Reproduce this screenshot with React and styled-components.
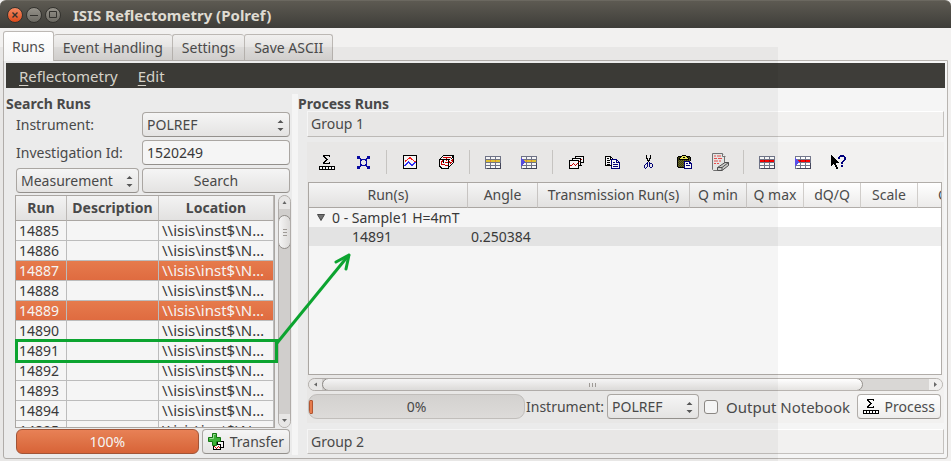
import React from "react";
import styled, { createGlobalStyle, css } from "styled-components";

const GlobalStyle = createGlobalStyle`
  *, *::before, *::after { box-sizing: border-box; }
  body { margin: 0; background: #f2f1f0; }
  body, button, input, select, table {
    font-family: "Noto Sans", "Open Sans", sans-serif;
    font-size: 14px;
    line-height: 20px;
    color: #4c4c4c;
  }
  button, input, select { margin: 0; padding: 0; }
`;

/* ---------- window frame ---------- */

const Window = styled.div`
  position: relative;
  display: flex;
  flex-direction: column;
  height: 100vh;
  min-height: 440px;
  overflow: hidden;
  background: #f2f1f0;
`;

const TitleBar = styled.header`
  display: flex;
  align-items: center;
  flex: none;
  gap: 3px;
  height: 28px;
  padding: 0 7px;
  border-radius: 6px 6px 0 0;
  background: linear-gradient(#5d5a52, #3e3d39);
  border-top: 1px solid #6b6860;
`;

const WindowButton = styled.button`
  display: grid;
  place-items: center;
  width: 16px;
  height: 16px;
  border: 1px solid #33322e;
  border-radius: 50%;
  color: #33322e;
  background: ${(p) =>
    p.$close ? "linear-gradient(#f58a62, #dd4a1a)" : "linear-gradient(#95928a, #6c6a63)"};
`;

const Title = styled.h1`
  margin: 0 0 0 9px;
  font-size: 15px;
  line-height: 20px;
  font-weight: 700;
  color: #dfdbd2;
`;

const TabList = styled.div`
  display: flex;
  align-items: flex-end;
  flex: none;
  height: 32px;
  padding: 0 3px;
`;

const Tab = styled.button`
  height: 26px;
  padding: 0 9px;
  white-space: nowrap;
  border: 1px solid #bcb8b4;
  border-left-width: ${(p) => (p.$first ? "0" : "1px")};
  border-right-width: 0;
  border-bottom: 0;
  border-radius: 3px 3px 0 0;
  background: linear-gradient(#f1f0ef, #d9d7d5);
  &:last-child { border-right-width: 1px; }
  ${(p) =>
    p.$active &&
    css`
      position: relative;
      z-index: 1;
      height: 30px;
      margin-bottom: -1px;
      padding: 0 8px;
      border-width: 1px 1px 0 1px;
      background: linear-gradient(#ffffff, #f5f5f5);
    `}
`;

const Panel = styled.main`
  display: flex;
  flex-direction: column;
  flex: 1;
  min-height: 0;
  margin: 0 3px 2px;
  padding: 2px 2px 0;
  border: 1px solid #b8b4b0;
  border-radius: 0 0 3px 3px;
  background: #f5f5f5;
`;

const MenuBar = styled.nav`
  display: flex;
  align-items: center;
  flex: none;
  gap: 20px;
  height: 25px;
  padding: 0 13px;
  background: #3e3d39;
`;

const MenuItem = styled.button`
  border: 0;
  background: none;
  font-size: 15px;
  color: #dfdbd2;
  u { text-underline-offset: 3px; }
`;

const Columns = styled.div`
  display: flex;
  flex: 1;
  min-height: 0;
`;

const SectionTitle = styled.h2`
  flex: none;
  margin: 8px 0 0;
  font-size: 14px;
  line-height: 15px;
  font-weight: 700;
`;

/* ---------- shared controls ---------- */

const controlBox = css`
  height: 25px;
  border: 1px solid #b1ada9;
  border-bottom-color: #9a9692;
  border-radius: 4px;
`;

const Button = styled.button`
  ${controlBox}
  display: flex;
  align-items: center;
  justify-content: center;
  gap: ${(p) => (p.$tight ? "6px" : "4px")};
  padding: 0 ${(p) => (p.$tight ? "5px" : "8px")};
  white-space: nowrap;
  background: linear-gradient(#ffffff, #eeedec);
`;

const SelectWrap = styled.div`
  display: grid;
  align-items: center;
  > * { grid-area: 1 / 1; }
  > svg { justify-self: end; margin-right: 6px; pointer-events: none; }
`;

const SelectField = styled.select`
  ${controlBox}
  appearance: none;
  width: 100%;
  padding: 0 18px 0 4px;
  background: linear-gradient(#ffffff, #eeedec);
`;

const TextField = styled.input`
  ${controlBox}
  width: 100%;
  padding: 0 4px;
  background: #ffffff;
  color: #3c3c3c;
`;

function Select({ id, label, options }) {
  return (
    <SelectWrap>
      <SelectField id={id} aria-label={label}>
        {options.map((o) => (
          <option key={o}>{o}</option>
        ))}
      </SelectField>
      <svg width="7" height="13" viewBox="0 0 7 13" aria-hidden="true">
        <path d="M3.5 2 6.5 5h-6zM.5 10h6l-3 3z" fill="#5a5a5a" />
      </svg>
    </SelectWrap>
  );
}

/* ---------- search column ---------- */

const SearchColumn = styled.section`
  display: flex;
  flex-direction: column;
  flex: none;
  width: 286px;
  padding-bottom: 4px;
`;

const SearchForm = styled.div`
  display: grid;
  grid-template-columns: 123px 1fr;
  align-items: center;
  gap: 3px;
  flex: none;
  padding: 1px 2px 2px 10px;
`;

const FieldLabel = styled.label`
  white-space: nowrap;
`;

const ResultArea = styled.div`
  display: flex;
  gap: 3px;
  flex: 1;
  min-height: 0;
  padding: 0 1px 0 9px;
`;

const ResultFrame = styled.div`
  flex: 1;
  overflow: hidden;
  border: 1px solid #b1ada9;
  background: #ffffff;
`;

const ResultTable = styled.table`
  width: 100%;
  table-layout: fixed;
  border-collapse: separate;
  border-spacing: 0;
  color: #3c3c3c;
  th {
    height: 25px;
    padding: 0;
    font-weight: 700;
    color: #4c4c4c;
    border-bottom: 1px solid #b1ada9;
    border-right: 1px solid #c4c1be;
    background: linear-gradient(#fdfdfd, #ecebea);
  }
  td {
    height: 20px;
    padding: 0 3px;
    line-height: 19px;
    white-space: nowrap;
    border-bottom: 1px solid #c4c4c4;
    border-right: 1px solid #c4c4c4;
  }
  td:last-child { font-size: 15px; }
`;

const ResultRow = styled.tr`
  ${(p) =>
    p.$selected &&
    css`
      color: #ffffff;
      td { background: linear-gradient(#f08050, #e97043); }
    `}
`;

const SearchFooter = styled.div`
  display: flex;
  gap: 3px;
  flex: none;
  padding: 1px 2px 0 10px;
`;

const ProgressTrack = styled.div`
  position: relative;
  display: flex;
  align-items: center;
  justify-content: center;
  flex: ${(p) => (p.$wide ? "1" : "0 0 217px")};
  height: 25px;
  overflow: hidden;
  border: 1px solid ${(p) => (p.$full ? "#a8583a" : "#c9c6c3")};
  border-radius: ${(p) => (p.$full ? "6px" : "9px")};
  color: ${(p) => (p.$full ? "#ffffff" : "#4c4c4c")};
  background: ${(p) =>
    p.$full ? "linear-gradient(#f2875a, #e0683a)" : "linear-gradient(#dcdad8, #e6e4e2)"};
`;

const ProgressStub = styled.span`
  position: absolute;
  left: 0;
  width: 4px;
  height: 14px;
  border: 1px solid #b95a35;
  border-radius: 1px;
  background: #f08050;
`;

/* ---------- scroll bars ---------- */

const ScrollTrack = styled.div`
  display: flex;
  flex-direction: ${(p) => (p.$vertical ? "column" : "row")};
  flex: none;
  width: ${(p) => (p.$vertical ? "13px" : "auto")};
  height: ${(p) => (p.$vertical ? "auto" : "13px")};
  overflow: hidden;
  border: 1px solid #b8b4b0;
  border-radius: 7px;
  background: #d9d7d5;
`;

const ScrollEnd = styled.button`
  display: grid;
  place-items: center;
  flex: none;
  width: ${(p) => (p.$vertical ? "11px" : "13px")};
  height: ${(p) => (p.$vertical ? "13px" : "11px")};
  border: 0;
  background: #f1f0ef;
`;

const ScrollThumb = styled.div`
  display: grid;
  place-items: center;
  flex: ${(p) => (p.$vertical ? "0 0 34px" : "543 1 0")};
  margin: ${(p) => (p.$vertical ? "6px -1px 0" : "-1px 0")};
  border: 1px solid #96928e;
  border-radius: 7px;
  background: linear-gradient(${(p) => (p.$vertical ? "90deg, " : "")}#ffffff, #e6e4e2);
`;

const ScrollGap = styled.div`
  flex: ${(p) => p.$share} 1 0;
`;

function Arrow({ d }) {
  return (
    <svg width="7" height="7" viewBox="0 0 7 7" aria-hidden="true">
      <path d={d} fill="#6a6a6a" />
    </svg>
  );
}

function Grip({ d }) {
  return (
    <svg width="9" height="9" viewBox="0 0 9 9" aria-hidden="true" shapeRendering="crispEdges">
      <path d={d} stroke="#a5a19d" fill="none" />
    </svg>
  );
}

/* ---------- process column ---------- */

const Splitter = styled.div`
  flex: none;
  width: 6px;
  margin: 6px 0 3px;
  background: #ffffff;
`;

const ProcessColumn = styled.section`
  display: flex;
  flex-direction: column;
  flex: 1;
  min-width: 0;
  padding: 0 1px 4px 0;
`;

const GroupHeader = styled.button`
  flex: none;
  height: ${(p) => (p.$last ? "25px" : "26px")};
  margin: 0 0 0 9px;
  padding: 0 3px;
  text-align: left;
  border: 1px solid #c4c1be;
  border-top-color: #ffffff;
  border-left-color: #ffffff;
  background: #f2f1f0;
`;

const GroupBody = styled.div`
  display: flex;
  flex-direction: column;
  flex: 1;
  min-height: 0;
  margin: 5px 0 6px 9px;
  padding: 0 1px 4px 1px;
  background: #f2f1f0;
`;

const ToolBar = styled.div`
  display: flex;
  align-items: center;
  flex: none;
  height: 40px;
  padding-left: 1px;
`;

const ToolButton = styled.button`
  display: grid;
  place-items: center;
  flex: none;
  width: 36px;
  height: 24px;
  border: 0;
  background: none;
`;

const ToolSeparator = styled.span`
  flex: none;
  width: 1px;
  height: 24px;
  margin: 0 5px;
  background: #cfccc9;
`;

const RunsFrame = styled.div`
  flex: 1;
  min-height: 0;
  overflow: hidden;
  margin-right: 1px;
  border: 1px solid #b1ada9;
  background: #ffffff;
`;

const RunsTable = styled.table`
  width: 100%;
  table-layout: fixed;
  border-collapse: separate;
  border-spacing: 0;
  color: #3c3c3c;
  th {
    height: 25px;
    padding: 0;
    overflow: hidden;
    white-space: nowrap;
    font-weight: 400;
    color: #4c4c4c;
    border-bottom: 1px solid #b1ada9;
    border-right: 1px solid #d0cdca;
    background: linear-gradient(#ffffff, #ecebea);
  }
  th:last-child { padding-left: 20px; border-right: 0; text-align: left; }
  td { height: 19px; padding: 0 3px; line-height: 19px; }
`;

const RunLine = styled.tr`
  background: ${(p) => (p.$shaded ? "#ededed" : "#ffffff")};
`;

const GroupLabel = styled.span`
  display: flex;
  align-items: center;
  gap: 7px;
  padding-left: 5px;
`;

const RunNumber = styled.span`
  padding-left: 40px;
`;

const ScrollRow = styled.div`
  flex: none;
  margin: 3px 0;
`;

const ProcessFooter = styled.div`
  display: flex;
  align-items: center;
  flex: none;
  height: 25px;
  padding-right: 2px;
  > button { margin-left: auto; }
`;

const InstrumentPicker = styled.div`
  flex: none;
  width: 92px;
  margin: 0 5px 0 3px;
`;

const InstrumentLabel = styled.label`
  margin-left: 1px;
  white-space: nowrap;
`;

const CheckLabel = styled.label`
  display: flex;
  align-items: center;
  gap: 8px;
  font-size: 15px;
  white-space: nowrap;
`;

const Checkbox = styled.input`
  appearance: none;
  width: 14px;
  height: 14px;
  border: 1px solid #918d89;
  border-radius: 3px;
  background: #ffffff;
`;

/* ---------- icons ---------- */

const PALETTE = {
  "#": "#000000",
  w: "#ffffff",
  b: "#0a0aa8",
  r: "#d40000",
  R: "#ff2020",
  B: "#3030ff",
  n: "#00007c",
  o: "#6b6b2c",
  O: "#3f3f10",
  y: "#f4f060",
};

function PixelIcon({ rows }) {
  const width = rows[0].length;
  return (
    <svg
      width={width}
      height={rows.length}
      viewBox={`0 0 ${width} ${rows.length}`}
      shapeRendering="crispEdges"
      aria-hidden="true"
    >
      {rows.flatMap((row, y) =>
        [...row].map((c, x) =>
          PALETTE[c] ? (
            <rect key={`${x}-${y}`} x={x} y={y} width="1" height="1" fill={PALETTE[c]} />
          ) : null
        )
      )}
    </svg>
  );
}

const PROCESS = [
  "....#######.....",
  "....##....#.....",
  ".....##.........",
  "......##........",
  ".......##.......",
  "......##........",
  ".....##.........",
  "....##....#.....",
  "....#######.....",
  "................",
  "................",
  "################",
  "#ww#ww#ww#ww#ww#",
  "#ww#ww#ww#ww#ww#",
  "################",
];

const EXPAND = [
  "bbb.......bbb",
  "bbb.......bbb",
  "bbbb.....bbbb",
  "...bbbbbbb...",
  "...bb...bb...",
  "...b.....b...",
  "...b.....b...",
  "...b.....b...",
  "...bb...bb...",
  "...bbbbbbb...",
  "bbbb.....bbbb",
  "bbb.......bbb",
  "bbb.......bbb",
];

const PLOT = [
  "##############",
  "#wwwwwwwwwwww#",
  "#wwwwwRRwwwww#",
  "#wwwwRRRRwwww#",
  "#wwwRwwwRRwww#",
  "#wRRwwwwwwRww#",
  "#wRwwBwwwwwRR#",
  "#wwwBBBwwwwBB#",
  "#wwBBwBBwwBBw#",
  "#wBBwwwBBBBww#",
  "#BBwwwwwBBwww#",
  "#wwwwwwwwwwww#",
  "#wwwwwwwwwwww#",
  "##############",
];

const CUBE = [
  "....###########",
  "...#wwwwwwwww##",
  "..#wrrrrrrrrw##",
  ".#wwwwwrwwww#w#",
  "###########wwr#",
  "#wwr#wwrw#wwrr#",
  "#wrr#wwww#rwwr#",
  "#wrw#wrrr#rrrw#",
  "#wrwwwwww#wrw#.",
  "#wrrrrwww#ww#..",
  "#wwwwwrrr#w#...",
  "##wwwwwww##....",
  ".##wwwwww#.....",
  "..########.....",
];

const PLOTS = [
  "......#########",
  "......#wwwwwww#",
  "...#########ww#",
  "...#wwwwwww#rw#",
  "##########w#ww#",
  "#wwwwwwww#r#ww#",
  "#wwwwwwww#w####",
  "#wwwrwwwr#w#...",
  "#wwrwrwrw#w#...",
  "#rrwwwrww####..",
  "#wwwwwwww#.....",
  "#wwwwwwww#.....",
  "##########.....",
];

const COPY = [
  "######.........",
  "#wwww##........",
  "#w##w#w#.......",
  "#wwww#nnnnnn...",
  "#w###wnwwwwnn..",
  "#wwwwwnwwwwnwn.",
  "#w###wnwnnwnnnn",
  "#wwwwwnwwwwwwwn",
  "#w###wnwnnnnnwn",
  "#######wwwwwwwn",
  "......nwnnnnnwn",
  "......nwwwwwwwn",
  "......nnnnnnnnn",
];

const CUT = [
  "..#...#..",
  "..#...#..",
  "..#...#..",
  "..##.##..",
  "...#.#...",
  "...###...",
  "....#....",
  "...n.n...",
  "..nn.nnn.",
  ".n.n.n..n",
  "n..n.n..n",
  "n..n.n..n",
  "n.n...nn.",
  ".n.......",
];

const PASTE = [
  ".....####......",
  ".####yyyy####..",
  "#OO#yy##yy#OO#.",
  "#O#yyyyyyyy#O#.",
  "#O##########o#.",
  "#OoOoOoOoOoOo#.",
  "#oOoOoOnnnnnn..",
  "#OoOoOonwwwwnn.",
  "#oOoOoOnwnnwnnn",
  "#OoOoOonwwwwwwn",
  "#oOoOoOnwnnnnwn",
  "#OoOoOonwwwwwwn",
  ".######nwwwwwwn",
  ".......nnnnnnnn",
];

const HELP = [
  "#........nnnn...",
  "##......nnnnnn..",
  "###....nn....nn.",
  "####...nn....nn.",
  "#####........nn.",
  "######......nn..",
  "#######....nn...",
  "########..nn....",
  "#####.....nn....",
  "##.##...........",
  "#...##....nn....",
  "....##....nn....",
  ".....##.........",
  ".....##.........",
];

const PLOT_MINI = [
  "....#######",
  "....#wwwww#",
  "....#wwwww#",
  "########ww#",
  "#wwwwww#ww#",
  "#rwwwrw#ww#",
  "#wrwrwr####",
  "#wwrwww#...",
  "########...",
];

function TableIcon({ band, line, pointer }) {
  return (
    <svg width="16" height="13" viewBox="0 0 16 13" shapeRendering="crispEdges" aria-hidden="true">
      <path d="M0 0h16v13H0z" fill="#74788c" />
      <path d="M1 1h4v2H1zM6 1h4v2H6zM11 1h4v2h-4zM1 7h4v2H1zM6 7h4v2H6zM11 7h4v2h-4zM1 10h4v2H1zM6 10h4v2H6zM11 10h4v2h-4z" fill="#fff" />
      <path d="M1 4h14v2H1z" fill={band} />
      <path d="M5 4h1v2H5zM10 4h1v2h-1z" fill={line} />
      <path d="M15 7h1v6H2v-1h13z" fill="#45485c" />
      {pointer && <path d="M0 2h1v1h1v1h1v1h1v2H3v1H2v1H1v1H0z" fill="#5a50e8" />}
    </svg>
  );
}

function ClearIcon() {
  return (
    <svg width="17" height="19" viewBox="0 0 17 19" aria-hidden="true">
      <path d="M.5.5h10l2 3v10l-5 4h-6l-1-1z" fill="#eeeeec" stroke="#777" />
      <path d="M10.5.5v3h3" fill="#fff" stroke="#777" />
      <path d="M2 3h2m1 0h4M2 5.5h3m1 0h4M2 8h4m1 0h2M2 10.5h2m1 0h2" stroke="#f05050" />
      <path d="M5.5 14.5 13 9.5h3.5v3L10 17.5H5.5z" fill="#d5d5d2" stroke="#555" />
      <path d="M5.5 14.5h4.5l6.5-5M10 14.5v3" fill="none" stroke="#555" />
    </svg>
  );
}

const TransferArt = styled.span`
  display: grid;
  width: 16px;
  height: 17px;
  > svg { grid-area: 1 / 1; }
  > svg:first-child { place-self: end; }
`;

function TransferIcon() {
  return (
    <TransferArt>
      <PixelIcon rows={PLOT_MINI} />
      <svg width="14" height="14" viewBox="0 0 14 14" aria-hidden="true">
        <path d="M4.5.5h4v4h4v4h-4v4h-4v-4h-4v-4h4z" fill="#3fb83a" stroke="#157a12" />
        <path d="M5.5 1.5h2M1.500 5.5h4v-4" fill="none" stroke="#9be596" />
      </svg>
    </TransferArt>
  );
}

const TOOL_GROUPS = [
  [
    ["Process", <PixelIcon rows={PROCESS} />],
    ["Expand groups", <PixelIcon rows={EXPAND} />],
  ],
  [
    ["Plot runs", <PixelIcon rows={PLOT} />],
    ["Plot groups", <PixelIcon rows={CUBE} />],
  ],
  [
    ["Insert row", <TableIcon band="#e6c832" line="#f0902c" />],
    ["Insert group", <TableIcon band="#e6c832" line="#f0902c" pointer />],
  ],
  [
    ["Group selected", <PixelIcon rows={PLOTS} />],
    ["Copy", <PixelIcon rows={COPY} />],
    ["Cut", <PixelIcon rows={CUT} />],
    ["Paste", <PixelIcon rows={PASTE} />],
    ["Clear", <ClearIcon />],
  ],
  [
    ["Delete row", <TableIcon band="#ff0000" line="#a01010" />],
    ["Delete group", <TableIcon band="#ff0000" line="#a01010" pointer />],
    ["What's this", <PixelIcon rows={HELP} />],
  ],
];

/* ---------- annotation and tint ---------- */

const Tint = styled.div`
  position: absolute;
  inset: 47px 173px 0 0;
  background: rgba(0, 0, 0, 0.04);
  pointer-events: none;
`;

const Annotation = styled.svg`
  position: absolute;
  left: 14px;
  top: 250px;
  z-index: 2;
  pointer-events: none;
`;

const RUNS = [14885, 14886, 14887, 14888, 14889, 14890, 14891, 14892, 14893, 14894, 14895];
const SELECTED = [14887, 14889];
const COLUMNS = [
  ["Run(s)", 159],
  ["Angle", 70],
  ["Transmission Run(s)", 152],
  ["Q min", 57],
  ["Q max", 57],
  ["dQ/Q", 57],
  ["Scale", 57],
  ["Options"],
];

export default function App() {
  return (
    <Window>
      <GlobalStyle />
      <TitleBar>
        <WindowButton $close aria-label="Close">
          <svg width="8" height="8" viewBox="0 0 8 8"><path d="m1.5 1.5 5 5m0-5-5 5" stroke="currentColor" strokeWidth="1.4" /></svg>
        </WindowButton>
        <WindowButton aria-label="Minimize">
          <svg width="8" height="8" viewBox="0 0 8 8"><path d="M0 4.5h8" stroke="currentColor" /></svg>
        </WindowButton>
        <WindowButton aria-label="Maximize">
          <svg width="8" height="8" viewBox="0 0 8 8"><path d="M.5.5h7v6h-7z" stroke="currentColor" fill="none" /></svg>
        </WindowButton>
        <Title>ISIS Reflectometry (Polref)</Title>
      </TitleBar>

      <TabList role="tablist">
        <Tab role="tab" aria-selected="true" $active>Runs</Tab>
        <Tab role="tab" aria-selected="false" $first>Event Handling</Tab>
        <Tab role="tab" aria-selected="false">Settings</Tab>
        <Tab role="tab" aria-selected="false">Save ASCII</Tab>
      </TabList>

      <Panel>
        <MenuBar>
          <MenuItem><u>R</u>eflectometry</MenuItem>
          <MenuItem><u>E</u>dit</MenuItem>
        </MenuBar>

        <Columns>
          <SearchColumn>
            <SectionTitle>Search Runs</SectionTitle>
            <SearchForm>
              <FieldLabel htmlFor="search-instrument">Instrument:</FieldLabel>
              <Select id="search-instrument" options={["POLREF"]} />
              <FieldLabel htmlFor="investigation">Investigation Id:</FieldLabel>
              <TextField id="investigation" defaultValue="1520249" />
              <Select label="Search type" options={["Measurement"]} />
              <Button>Search</Button>
            </SearchForm>
            <ResultArea>
              <ResultFrame>
                <ResultTable>
                  <colgroup>
                    <col width="51" />
                    <col width="92" />
                    <col />
                  </colgroup>
                  <thead>
                    <tr><th>Run</th><th>Description</th><th>Location</th></tr>
                  </thead>
                  <tbody>
                    {RUNS.map((run) => (
                      <ResultRow key={run} $selected={SELECTED.includes(run)}>
                        <td>{run}</td>
                        <td />
                        <td>{"\\\\isis\\inst$\\N…"}</td>
                      </ResultRow>
                    ))}
                  </tbody>
                </ResultTable>
              </ResultFrame>
              <ScrollTrack $vertical>
                <ScrollEnd $vertical aria-label="Scroll up"><Arrow d="M1.5 5h4l-2-3z" /></ScrollEnd>
                <ScrollThumb $vertical><Grip d="M3 1.5h4M3 4.5h4M3 7.5h4" /></ScrollThumb>
                <ScrollGap $share={1} />
                <ScrollEnd $vertical aria-label="Scroll down"><Arrow d="M1 2h5L3.5 5z" /></ScrollEnd>
              </ScrollTrack>
            </ResultArea>
            <SearchFooter>
              <ProgressTrack $wide $full role="progressbar" aria-valuenow={100}>100%</ProgressTrack>
              <Button $tight><TransferIcon />Transfer</Button>
            </SearchFooter>
          </SearchColumn>

          <Splitter />

          <ProcessColumn>
            <SectionTitle>Process Runs</SectionTitle>
            <GroupHeader>Group 1</GroupHeader>
            <GroupBody>
              <ToolBar role="toolbar">
                {TOOL_GROUPS.map((group, i) => (
                  <React.Fragment key={i}>
                    {i > 0 && <ToolSeparator />}
                    {group.map(([name, icon]) => (
                      <ToolButton key={name} aria-label={name}>{icon}</ToolButton>
                    ))}
                  </React.Fragment>
                ))}
              </ToolBar>
              <RunsFrame>
                <RunsTable>
                  <colgroup>
                    {COLUMNS.map(([name, width]) => <col key={name} width={width} />)}
                  </colgroup>
                  <thead>
                    <tr>{COLUMNS.map(([name]) => <th key={name}>{name}</th>)}</tr>
                  </thead>
                  <tbody>
                    <RunLine>
                      <td colSpan={8}>
                        <GroupLabel>
                          <svg width="8" height="7" viewBox="0 0 8 7" aria-hidden="true">
                            <path d="M.5.5h7l-3.5 6z" fill="#777" stroke="#4c4c4c" />
                          </svg>
                          0 - Sample1 H=4mT
                        </GroupLabel>
                      </td>
                    </RunLine>
                    <RunLine $shaded>
                      <td><RunNumber>14891</RunNumber></td>
                      <td>0.250384</td>
                      <td colSpan={6} />
                    </RunLine>
                  </tbody>
                </RunsTable>
              </RunsFrame>
              <ScrollRow>
                <ScrollTrack>
                  <ScrollEnd aria-label="Scroll left"><Arrow d="M5 1.5v4l-3-2z" /></ScrollEnd>
                  <ScrollThumb><Grip d="M1.5 3v4M4.5 3v4M7.5 3v4" /></ScrollThumb>
                  <ScrollGap $share={66} />
                  <ScrollEnd aria-label="Scroll right"><Arrow d="M2 1v5l3-2.5z" /></ScrollEnd>
                </ScrollTrack>
              </ScrollRow>
              <ProcessFooter>
                <ProgressTrack role="progressbar" aria-valuenow={0}><ProgressStub />0%</ProgressTrack>
                <InstrumentLabel htmlFor="process-instrument">Instrument:</InstrumentLabel>
                <InstrumentPicker>
                  <Select id="process-instrument" options={["POLREF"]} />
                </InstrumentPicker>
                <CheckLabel><Checkbox type="checkbox" />Output Notebook</CheckLabel>
                <Button $tight><PixelIcon rows={PROCESS} />Process</Button>
              </ProcessFooter>
            </GroupBody>
            <GroupHeader $last>Group 2</GroupHeader>
          </ProcessColumn>
        </Columns>
      </Panel>

      <Tint />
      <Annotation width="344" height="116" viewBox="14 250 344 116" fill="none" stroke="#0ca430" aria-hidden="true">
        <path d="M16.5 340.5h260v21h-260z" strokeWidth="3" />
        <path d="M277 343 348 256" strokeWidth="3" />
        <path d="M349 255 336 262M349 255 346 269" strokeWidth="3" strokeLinecap="round" />
      </Annotation>
    </Window>
  );
}
